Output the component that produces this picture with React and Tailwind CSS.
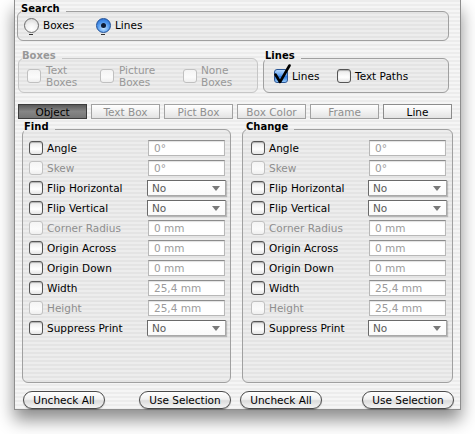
import React from "react";

const rows = [
  ["Angle", false, "field", "0°"],
  ["Skew", true, "field", "0°"],
  ["Flip Horizontal", false, "select", "No"],
  ["Flip Vertical", false, "select", "No"],
  ["Corner Radius", true, "field", "0 mm"],
  ["Origin Across", false, "field", "0 mm"],
  ["Origin Down", false, "field", "0 mm"],
  ["Width", false, "field", "25,4 mm"],
  ["Height", true, "field", "25,4 mm"],
  ["Suppress Print", false, "select", "No"],
];

const tabs = [
  ["Object", "on"],
  ["Text Box", "off"],
  ["Pict Box", "off"],
  ["Box Color", "off"],
  ["Frame", "off"],
  ["Line", "enabled"],
];

function Check({ disabled, checked }) {
  if (checked) {
    return (
      <span className="relative block h-[14px] w-[14px] shrink-0 rounded-[3px] border border-[#2b5797] bg-[linear-gradient(#b5d8fd,#5d9ff0_45%,#2f7be0_55%,#93c9fb)]">
        <svg
          className="absolute left-[-2px] top-[-6px] h-[20px] w-[19px]"
          viewBox="0 0 19 20"
        >
          <path
            d="M2.5 10.5 L7 18 L16.5 1.5"
            fill="none"
            stroke="#000"
            strokeWidth="2.6"
            strokeLinecap="round"
            strokeLinejoin="round"
          />
        </svg>
      </span>
    );
  }
  return (
    <span
      className={`block h-[14px] w-[14px] shrink-0 rounded-[3px] border ${
        disabled
          ? "border-[#c0c0c0] bg-[linear-gradient(#f4f4f4,#fbfbfb_60%,#eeeeee)]"
          : "border-[#555] bg-[linear-gradient(#e9e9e9,#ffffff_60%,#e4e4e4)] shadow-[inset_0_1px_1px_rgba(0,0,0,0.25)]"
      }`}
    />
  );
}

function Radio({ on }) {
  return (
    <span className="relative block h-[15px] w-[15px] shrink-0">
      {on ? (
        <span className="flex h-[15px] w-[15px] items-center justify-center rounded-full border border-[#1d4e96] bg-[radial-gradient(circle_at_50%_70%,#c2e3ff,#4b94ec_55%,#1d60c6)]">
          <span className="block h-[5px] w-[5px] rounded-full bg-[#0d1c36]" />
        </span>
      ) : (
        <span className="block h-[15px] w-[15px] rounded-full border border-[#6a6a6a] bg-[radial-gradient(circle_at_50%_75%,#ffffff,#f2f2f2_45%,#cfcfcf)]" />
      )}
      <span className="absolute bottom-[-2px] left-[5px] h-[1px] w-[4px] bg-[#333]" />
    </span>
  );
}

function Group({ label, disabled, className, legendClass, children }) {
  return (
    <fieldset
      className={`shrink-0 rounded-[6px] border bg-[rgba(0,0,0,0.03)] ${
        disabled ? "border-[#c6c6c6]" : "border-[#a0a0a0]"
      } ${className}`}
    >
      <legend
        className={`pb-[4px] pr-[6px] text-[10px] font-bold leading-[14px] ${
          disabled ? "text-[#989898]" : "text-black"
        } ${legendClass}`}
      >
        {label}
      </legend>
      {children}
    </fieldset>
  );
}

function Field({ value }) {
  return (
    <span className="block h-[16px] w-[77px] shrink-0 border border-[#b8b8b8] border-t-[#8c8c8c] bg-white pl-[5px] leading-[14px] text-[#9c9c9c] shadow-[inset_0_1px_1px_rgba(0,0,0,0.12)]">
      {value}
    </span>
  );
}

function Select({ value }) {
  return (
    <span className="relative -ml-[1px] flex h-[16px] w-[79px] shrink-0 items-center border border-[#6a6a6a] border-b-[#a8a8a8] border-r-[#a8a8a8] bg-[linear-gradient(#ffffff,#fafafa)] pl-[4px] text-[#5a5a5a] shadow-[1px_1px_1px_rgba(0,0,0,0.2)]">
      {value}
      <svg className="absolute right-[5px] top-[5px] h-[5px] w-[8px]" viewBox="0 0 8 5">
        <path d="M0 0 L8 0 L4 5 Z" fill="#7a7a7a" />
      </svg>
    </span>
  );
}

function Row({ label, dis, type, value, labelW }) {
  return (
    <div className="flex h-[20px] items-center">
      <Check disabled={dis} />
      <span className={`ml-[4px] shrink-0 ${labelW} ${dis ? "text-[#8e8e8e]" : "text-black"}`}>
        {label}
      </span>
      {type === "select" ? <Select value={value} /> : <Field value={value} />}
    </div>
  );
}

function Button({ children, w }) {
  return (
    <button
      className={`flex h-[18px] ${w} items-center justify-center rounded-full border border-[#4a4a4a] bg-[linear-gradient(#ffffff,#f1f1f1_45%,#dcdcdc_55%,#f4f4f4)] text-black shadow-[0_1px_1px_rgba(0,0,0,0.25)]`}
    >
      {children}
    </button>
  );
}

export default function App() {
  return (
    <div className="h-[434px] w-[475px] overflow-hidden bg-white font-['DejaVu_Sans',sans-serif] text-[10.5px] leading-[14px]">
      <div className="ml-[14px] flex h-[410px] w-[447px] flex-col border-x border-b border-[#8e8e8e] bg-[image:repeating-linear-gradient(180deg,#ececec_0px,#ececec_2px,#f5f5f5_2px,#f5f5f5_4px)] shadow-[0_10px_16px_rgba(0,0,0,0.45)]">
        {/* Search */}
        <Group label="Search" className="ml-[2px] mt-[2px] w-[432px] pb-[6px]" legendClass="ml-[3px]">
          <div className="-mt-[4px] flex h-[18px] items-center pl-[6px]">
            <div className="flex w-[72px] items-center gap-[4px]">
              <Radio />
              <span>Boxes</span>
            </div>
            <div className="flex items-center gap-[4px]">
              <Radio on />
              <span>Lines</span>
            </div>
          </div>
        </Group>

        {/* Boxes / Lines */}
        <div className="mt-[8px] flex items-start">
          <Group label="Boxes" disabled className="ml-[3px] w-[240px] pb-[4px]" legendClass="ml-[3px]">
            <div className="-mt-[3px] flex h-[24px] items-center pl-[8px] text-[#989898]">
              <div className="flex w-[73px] items-center gap-[5px]">
                <Check disabled />
                <span className="leading-[12px]">
                  Text
                  <br />
                  Boxes
                </span>
              </div>
              <div className="flex w-[83px] items-center gap-[5px]">
                <Check disabled />
                <span className="leading-[12px]">
                  Picture
                  <br />
                  Boxes
                </span>
              </div>
              <div className="flex items-center gap-[4px]">
                <Check disabled />
                <span className="leading-[12px]">
                  None
                  <br />
                  Boxes
                </span>
              </div>
            </div>
          </Group>
          <Group label="Lines" className="ml-[5px] w-[186px] pb-[4px]" legendClass="ml-[1px]">
            <div className="-mt-[3px] flex h-[24px] items-center pl-[10px]">
              <div className="flex w-[63px] items-center gap-[4px]">
                <Check checked />
                <span>Lines</span>
              </div>
              <div className="flex items-center gap-[4px]">
                <Check />
                <span>Text Paths</span>
              </div>
            </div>
          </Group>
        </div>

        {/* Tabs */}
        <div className="ml-[3px] mt-[11px] grid w-[434px] grid-cols-6 gap-[4px]">
          {tabs.map(([t, s]) => (
            <div
              key={t}
              className={`flex h-[15px] items-center justify-center border ${
                s === "on"
                  ? "border-[#3c3c3c] bg-[linear-gradient(#5a5a5a,#868686_50%,#767676)] text-black"
                  : s === "enabled"
                  ? "border-[#8c8c8c] bg-[linear-gradient(#ffffff,#f2f2f2_50%,#e3e3e3)] text-black"
                  : "border-[#a2a2a2] bg-[linear-gradient(#ffffff,#f2f2f2_50%,#e3e3e3)] text-[#8f8f8f]"
              }`}
            >
              {t}
            </div>
          ))}
        </div>

        {/* Find / Change */}
        <div className="mt-[1px] flex items-start">
          <Group label="Find" className="ml-[7px] w-[209px] pb-[44px]" legendClass="ml-[1px]">
            <div className="pl-[6px]">
              {rows.map(([l, d, t, v]) => (
                <Row key={l} label={l} dis={d} type={t} value={v} labelW="w-[101px]" />
              ))}
            </div>
          </Group>
          <Group label="Change" className="ml-[11px] w-[211px] pb-[44px]" legendClass="ml-[3px]">
            <div className="pl-[8px]">
              {rows.map(([l, d, t, v]) => (
                <Row key={l} label={l} dis={d} type={t} value={v} labelW="w-[100px]" />
              ))}
            </div>
          </Group>
        </div>

        {/* Buttons */}
        <div className="mt-[8px] flex">
          <div className="ml-[8px] flex w-[208px] justify-between">
            <Button w="w-[82px]">Uncheck All</Button>
            <Button w="w-[92px]">Use Selection</Button>
          </div>
          <div className="ml-[9px] flex w-[214px] justify-between">
            <Button w="w-[82px]">Uncheck All</Button>
            <Button w="w-[92px]">Use Selection</Button>
          </div>
        </div>
      </div>
    </div>
  );
}
